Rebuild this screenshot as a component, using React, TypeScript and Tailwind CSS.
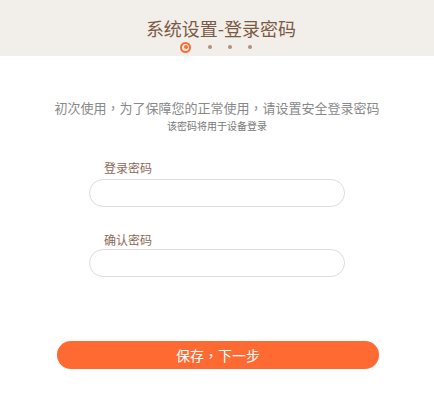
import React from "react";

const font = { fontFamily: '"Noto Sans CJK SC", "Noto Sans", sans-serif' };
const tc = { fontFamily: '"Noto Sans CJK TC", "Noto Sans CJK SC", sans-serif' };

function Comma() {
  return <span style={tc}>，</span>;
}

export default function App() {
  return (
    <div className="w-[434px] h-[412px] bg-white" style={font}>
      <div className="h-[56px] bg-[#f2eee9] flex flex-col items-center pt-[17px]">
        <div className="text-[18px] leading-[22px] text-[#7b5a45] ml-[8px]">系统设置-登录密码</div>
        <div className="mt-[3px] flex items-center h-[10px]">
          <div className="w-[11px] h-[11px] rounded-full border-[2px] border-[#ff6a33] flex items-center justify-center ml-[-2px]">
            <div className="w-[4px] h-[4px] rounded-full bg-[#ff6a33]" />
          </div>
          <div className="w-[4px] h-[4px] rounded-full bg-[#b38f78] ml-[17px]" />
          <div className="w-[4px] h-[4px] rounded-full bg-[#b38f78] ml-[16px]" />
          <div className="w-[4px] h-[4px] rounded-full bg-[#b38f78] ml-[16px]" />
        </div>
      </div>
      <div className="flex flex-col items-center">
        <div className="mt-[43px] text-[13px] leading-[18px] text-[#888888]">
          初次使用<Comma />为了保障您的正常使用<Comma />请设置安全登录密码
        </div>
        <div className="mt-[2px] text-[10px] leading-[14px] text-[#777777]">该密码将用于设备登录</div>
      </div>
      <div className="ml-[89px] w-[256px] mt-[26px]">
        <div className="pl-[15px] text-[12px] leading-[18px] text-[#8b6a56]">登录密码</div>
        <input
          type="password"
          className="mt-[2px] block w-[256px] h-[28px] rounded-full border border-[#dddddd] outline-none px-3 text-[13px]"
        />
        <div className="mt-[24px] pl-[15px] text-[12px] leading-[18px] text-[#8b6a56]">确认密码</div>
        <input
          type="password"
          className="mt-[0px] block w-[256px] h-[28px] rounded-full border border-[#dddddd] outline-none px-3 text-[13px]"
        />
      </div>
      <div className="mt-[64px] ml-[57px] w-[322px] h-[28px] rounded-full bg-[#ff6a33] flex items-center justify-center text-white text-[14px]">
        保存<Comma />下一步
      </div>
    </div>
  );
}
